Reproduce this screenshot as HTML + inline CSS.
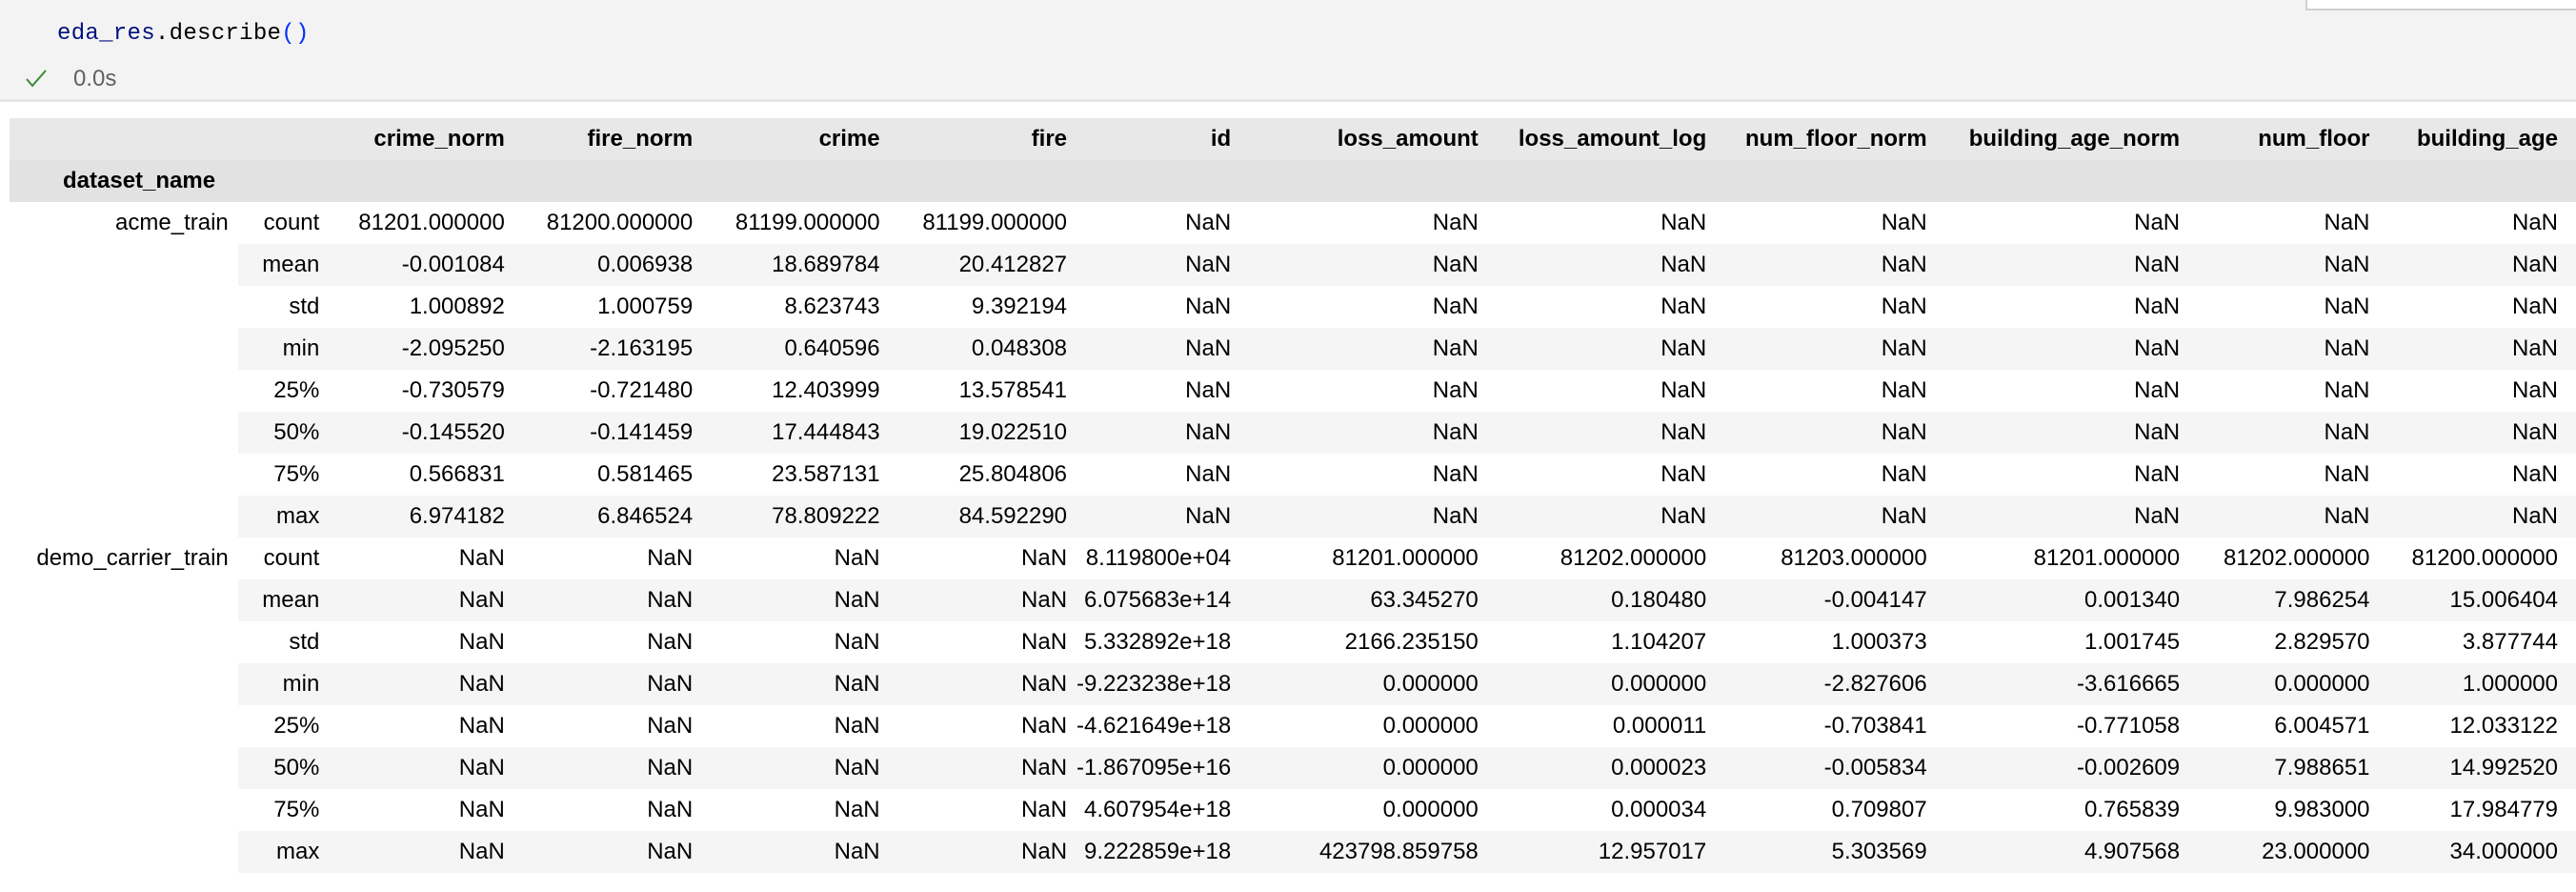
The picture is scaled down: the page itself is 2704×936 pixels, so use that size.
<!DOCTYPE html>
<html><head><meta charset="utf-8">
<style>
html,body{margin:0;padding:0;background:#fff;width:2704px;height:936px;overflow:hidden;}
.top{position:absolute;left:0;top:0;width:2704px;height:104px;background:#f3f3f3;border-bottom:3px solid #e6e6e6;}
.code{position:absolute;left:60px;top:20px;font-family:"Liberation Mono",monospace;font-size:24px;line-height:32px;color:#000;letter-spacing:0.3px}
.code .v{color:#001080}.code .p{color:#0431fa}
.chk{position:absolute;left:26px;top:70px;}
.time{position:absolute;left:77px;top:68px;font-family:"Liberation Sans",sans-serif;font-size:24px;line-height:30px;color:#616161}
.box{position:absolute;left:2420px;top:-2px;width:300px;height:9px;background:#fff;border:2px solid #d0d0d0;}
table{position:absolute;left:10px;top:124px;border-collapse:collapse;table-layout:fixed;font-family:"Liberation Sans",sans-serif;font-size:24px;color:#000;}
td,th{height:44px;padding:0 10px 0 0;text-align:right;white-space:nowrap;box-sizing:border-box;line-height:44px;}
thead tr.h1{background:#e8e8e8}
thead tr.h2{background:#e2e2e2}
th{font-weight:bold}
th.dn{text-align:left;padding-left:56px}
tbody tr:nth-child(even) td.s{background:#f5f5f5}
td.last,th.last{padding-right:19px}
</style></head><body>
<div class="top">
<div class="code"><span class="v">eda_res</span>.describe<span class="p">()</span></div>
<svg class="chk" width="24" height="24" viewBox="0 0 24 24"><path d="M2 13 L8 20 L22 4" fill="none" stroke="#388a34" stroke-width="2"/></svg>
<div class="time">0.0s</div>
<div class="box"></div>
</div>
<table>
<colgroup><col style="width:240px"><col style="width:96px"><col style="width:195px"><col style="width:198px"><col style="width:197px"><col style="width:197px"><col style="width:163px"><col style="width:261px"><col style="width:240px"><col style="width:232px"><col style="width:266px"><col style="width:200px"><col style="width:207px"></colgroup>
<thead>
<tr class="h1"><th></th><th></th><th>crime_norm</th><th>fire_norm</th><th>crime</th><th>fire</th><th>id</th><th>loss_amount</th><th>loss_amount_log</th><th>num_floor_norm</th><th>building_age_norm</th><th>num_floor</th><th class="last">building_age</th></tr>
<tr class="h2"><th class="dn">dataset_name</th><th></th><th></th><th></th><th></th><th></th><th></th><th></th><th></th><th></th><th></th><th></th><th class="last"></th></tr>
</thead>
<tbody>
<tr><td rowspan="8" style="vertical-align:top">acme_train</td><td class="s">count</td><td class="s">81201.000000</td><td class="s">81200.000000</td><td class="s">81199.000000</td><td class="s">81199.000000</td><td class="s">NaN</td><td class="s">NaN</td><td class="s">NaN</td><td class="s">NaN</td><td class="s">NaN</td><td class="s">NaN</td><td class="s last">NaN</td></tr>
<tr><td class="s">mean</td><td class="s">-0.001084</td><td class="s">0.006938</td><td class="s">18.689784</td><td class="s">20.412827</td><td class="s">NaN</td><td class="s">NaN</td><td class="s">NaN</td><td class="s">NaN</td><td class="s">NaN</td><td class="s">NaN</td><td class="s last">NaN</td></tr>
<tr><td class="s">std</td><td class="s">1.000892</td><td class="s">1.000759</td><td class="s">8.623743</td><td class="s">9.392194</td><td class="s">NaN</td><td class="s">NaN</td><td class="s">NaN</td><td class="s">NaN</td><td class="s">NaN</td><td class="s">NaN</td><td class="s last">NaN</td></tr>
<tr><td class="s">min</td><td class="s">-2.095250</td><td class="s">-2.163195</td><td class="s">0.640596</td><td class="s">0.048308</td><td class="s">NaN</td><td class="s">NaN</td><td class="s">NaN</td><td class="s">NaN</td><td class="s">NaN</td><td class="s">NaN</td><td class="s last">NaN</td></tr>
<tr><td class="s">25%</td><td class="s">-0.730579</td><td class="s">-0.721480</td><td class="s">12.403999</td><td class="s">13.578541</td><td class="s">NaN</td><td class="s">NaN</td><td class="s">NaN</td><td class="s">NaN</td><td class="s">NaN</td><td class="s">NaN</td><td class="s last">NaN</td></tr>
<tr><td class="s">50%</td><td class="s">-0.145520</td><td class="s">-0.141459</td><td class="s">17.444843</td><td class="s">19.022510</td><td class="s">NaN</td><td class="s">NaN</td><td class="s">NaN</td><td class="s">NaN</td><td class="s">NaN</td><td class="s">NaN</td><td class="s last">NaN</td></tr>
<tr><td class="s">75%</td><td class="s">0.566831</td><td class="s">0.581465</td><td class="s">23.587131</td><td class="s">25.804806</td><td class="s">NaN</td><td class="s">NaN</td><td class="s">NaN</td><td class="s">NaN</td><td class="s">NaN</td><td class="s">NaN</td><td class="s last">NaN</td></tr>
<tr><td class="s">max</td><td class="s">6.974182</td><td class="s">6.846524</td><td class="s">78.809222</td><td class="s">84.592290</td><td class="s">NaN</td><td class="s">NaN</td><td class="s">NaN</td><td class="s">NaN</td><td class="s">NaN</td><td class="s">NaN</td><td class="s last">NaN</td></tr>
<tr><td rowspan="8" style="vertical-align:top">demo_carrier_train</td><td class="s">count</td><td class="s">NaN</td><td class="s">NaN</td><td class="s">NaN</td><td class="s">NaN</td><td class="s">8.119800e+04</td><td class="s">81201.000000</td><td class="s">81202.000000</td><td class="s">81203.000000</td><td class="s">81201.000000</td><td class="s">81202.000000</td><td class="s last">81200.000000</td></tr>
<tr><td class="s">mean</td><td class="s">NaN</td><td class="s">NaN</td><td class="s">NaN</td><td class="s">NaN</td><td class="s">6.075683e+14</td><td class="s">63.345270</td><td class="s">0.180480</td><td class="s">-0.004147</td><td class="s">0.001340</td><td class="s">7.986254</td><td class="s last">15.006404</td></tr>
<tr><td class="s">std</td><td class="s">NaN</td><td class="s">NaN</td><td class="s">NaN</td><td class="s">NaN</td><td class="s">5.332892e+18</td><td class="s">2166.235150</td><td class="s">1.104207</td><td class="s">1.000373</td><td class="s">1.001745</td><td class="s">2.829570</td><td class="s last">3.877744</td></tr>
<tr><td class="s">min</td><td class="s">NaN</td><td class="s">NaN</td><td class="s">NaN</td><td class="s">NaN</td><td class="s">-9.223238e+18</td><td class="s">0.000000</td><td class="s">0.000000</td><td class="s">-2.827606</td><td class="s">-3.616665</td><td class="s">0.000000</td><td class="s last">1.000000</td></tr>
<tr><td class="s">25%</td><td class="s">NaN</td><td class="s">NaN</td><td class="s">NaN</td><td class="s">NaN</td><td class="s">-4.621649e+18</td><td class="s">0.000000</td><td class="s">0.000011</td><td class="s">-0.703841</td><td class="s">-0.771058</td><td class="s">6.004571</td><td class="s last">12.033122</td></tr>
<tr><td class="s">50%</td><td class="s">NaN</td><td class="s">NaN</td><td class="s">NaN</td><td class="s">NaN</td><td class="s">-1.867095e+16</td><td class="s">0.000000</td><td class="s">0.000023</td><td class="s">-0.005834</td><td class="s">-0.002609</td><td class="s">7.988651</td><td class="s last">14.992520</td></tr>
<tr><td class="s">75%</td><td class="s">NaN</td><td class="s">NaN</td><td class="s">NaN</td><td class="s">NaN</td><td class="s">4.607954e+18</td><td class="s">0.000000</td><td class="s">0.000034</td><td class="s">0.709807</td><td class="s">0.765839</td><td class="s">9.983000</td><td class="s last">17.984779</td></tr>
<tr><td class="s">max</td><td class="s">NaN</td><td class="s">NaN</td><td class="s">NaN</td><td class="s">NaN</td><td class="s">9.222859e+18</td><td class="s">423798.859758</td><td class="s">12.957017</td><td class="s">5.303569</td><td class="s">4.907568</td><td class="s">23.000000</td><td class="s last">34.000000</td></tr>
</tbody>
</table>
</body></html>
